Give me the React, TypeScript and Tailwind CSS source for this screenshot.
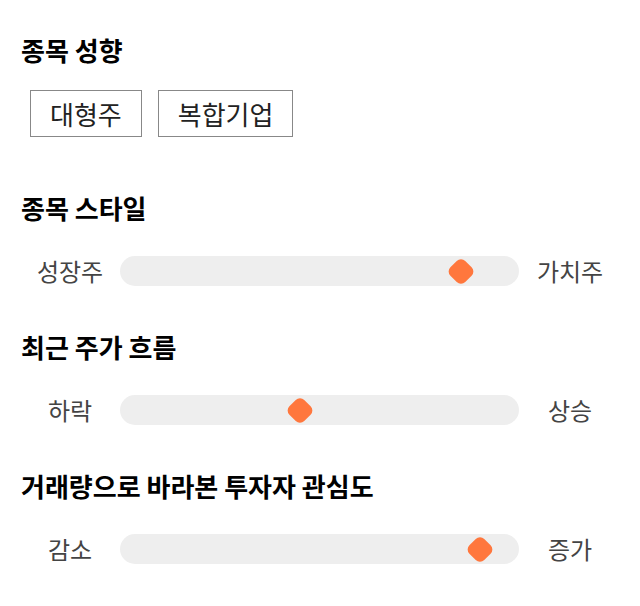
const font = "font-['Noto_Sans_CJK_KR','Noto_Sans',sans-serif]";

const sliders = [
  { title: "종목 스타일", left: "성장주", right: "가치주", value: 0.855 },
  { title: "최근 주가 흐름", left: "하락", right: "상승", value: 0.452 },
  { title: "거래량으로 바라본 투자자 관심도", left: "감소", right: "증가", value: 0.903 },
];

function Slider({ left, right, value }: { left: string; right: string; value: number }) {
  return (
    <div className="flex items-center pl-[20px]">
      <div className="w-[100px] text-center text-[24px] leading-[30px] text-[#444]">{left}</div>
      <div className="relative h-[30px] w-[399px] rounded-full bg-[#eeeeee]">
        <div
          className="absolute top-[4.5px] h-[21px] w-[21px] -translate-x-1/2 rotate-45 rounded-[6px] bg-[#ff773d]"
          style={{ left: `${value * 100}%` }}
        />
      </div>
      <div className="w-[102px] text-center text-[24px] leading-[30px] text-[#444]">{right}</div>
    </div>
  );
}

export default function App() {
  return (
    <div className={`${font} h-[606px] w-[640px] bg-white pt-[32px]`}>
      <h2 className="pl-[21px] text-[26px] font-bold leading-[36px] text-black">종목 성향</h2>
      <div className="mt-[22px] flex gap-[16px] pl-[30px]">
        {["대형주", "복합기업"].map((t) => (
          <div
            key={t}
            className="flex h-[47px] items-center border border-[#888] px-[19px] text-[26px] text-[#222]"
          >
            {t}
          </div>
        ))}
      </div>
      <div className="mt-[53px] flex flex-col gap-[43px]">
        {sliders.map((s) => (
          <div key={s.title}>
            <h2 className="pl-[21px] text-[26px] font-bold leading-[36px] text-black">{s.title}</h2>
            <div className="mt-[30px]">
              <Slider left={s.left} right={s.right} value={s.value} />
            </div>
          </div>
        ))}
      </div>
    </div>
  );
}
